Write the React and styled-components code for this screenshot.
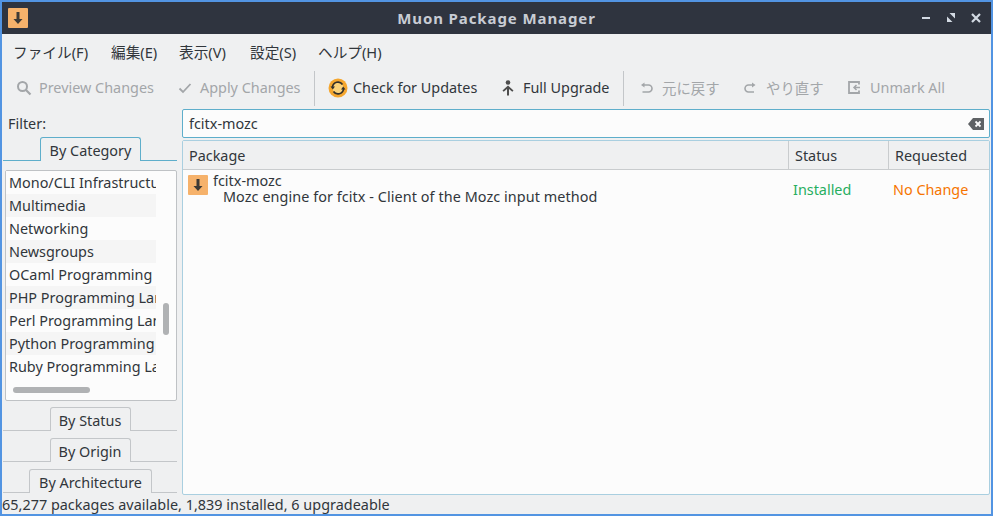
import React from 'react';
import styled, { createGlobalStyle } from 'styled-components';

const Global = createGlobalStyle`
html,body{margin:0;padding:0;background:#eff0f1;}
body{font-family:"Noto Sans","Noto Sans CJK JP",sans-serif;font-size:14.4px;color:#31363b;}
`
const Win = styled.div`
width:993px;height:516px;box-sizing:border-box;overflow:hidden;
border:2px solid #5294e2;
display:flex;flex-direction:column;background:#eff0f1;
`
const TitleBar = styled.div`
height:32px;flex:none;background:#2f343f;display:grid;grid-template-columns:1fr auto 1fr;align-items:center;
`
const AppIcon = styled.div`
width:20px;height:20px;margin-left:6px;background:#f6b26b;border-radius:1px;display:flex;align-items:center;justify-content:center;
`
const Title = styled.div`
font-weight:700;font-size:15px;color:#c8ccd4;letter-spacing:.9px;
`
const WinBtns = styled.div`
display:flex;justify-content:flex-end;align-items:center;gap:15px;padding-right:10px;color:#d3dae3;
`
const MenuBar = styled.div`
height:34px;flex:none;display:flex;align-items:center;padding-left:11px;box-sizing:border-box;
`
const MenuItem = styled.div`
margin-right:${p=>p.$gap}px;font-size:14.67px;white-space:nowrap;width:${p=>p.$w}px;
`
const ToolBar = styled.div`
height:40px;flex:none;display:flex;align-items:center;box-sizing:border-box;
`
const ToolBtn = styled.div`
display:flex;align-items:center;flex:none;width:${p=>p.$w}px;margin-left:${p=>p.$ml}px;
color:${p=>p.$off?'#a3a6a9':'#31363b'};white-space:nowrap;
svg{flex:none;margin-right:${p=>p.$gap||7}px;}
`
const ToolLabel = styled.span`
margin-top:-2px;
`
const Sep = styled.div`
width:1px;height:35px;background:#c3c6c9;flex:none;margin-left:${p=>p.$ml}px;
`
const Body = styled.div`
flex:1;min-height:0;display:flex;
`
const Side = styled.div`
width:174px;flex:none;display:flex;flex-direction:column;margin-left:1px;
`
const FilterLabel = styled.div`
height:30px;flex:none;display:flex;align-items:center;padding:1px 0 0 5px;box-sizing:border-box;
`
const TabRow = styled.div`
display:flex;align-items:flex-end;height:23px;flex:none;margin-top:${p=>p.$mt||0}px;margin-bottom:${p=>p.$mb||0}px;
`
const TabLine = styled.div`
flex:${p=>p.$grow||1} 1 0;border-bottom:1px solid ${p=>p.$on?'#5eaecb':'#c3c6c9'};
`
const Tab = styled.div`
flex:none;width:${p=>p.$w}px;height:24px;box-sizing:border-box;display:flex;align-items:center;justify-content:center;padding-top:2px;
border:1px solid ${p=>p.$on?'#5eaecb':'#c3c6c9'};border-bottom:none;border-radius:3px 3px 0 0;
`
const ListBox = styled.div`
margin:0 0 0 2px;width:172px;height:231px;flex:none;box-sizing:border-box;border:1px solid #bfc2c5;border-radius:2px;background:#fcfcfc;
display:grid;grid-template-columns:150px 1fr;grid-template-rows:209px 1fr;
`
const Items = styled.div`
overflow:hidden;
`
const Item = styled.div`
height:23px;line-height:23px;padding-left:3px;white-space:nowrap;overflow:hidden;background:${p=>p.$alt?'#f5f5f5':'#fcfcfc'};
`
const VTrack = styled.div`
padding:132px 0 0 7px;
`
const VThumb = styled.div`
width:6px;height:32px;border-radius:3px;background:#b0b2b4;
`
const HTrack = styled.div`
padding:7px 0 0 7px;
`
const HThumb = styled.div`
width:77px;height:6px;border-radius:3px;background:#b0b2b4;
`
const Main = styled.div`
flex:1;min-width:0;margin-left:5px;display:flex;flex-direction:column;
`
const Search = styled.div`
height:29px;flex:none;margin-top:1px;margin-right:1px;box-sizing:border-box;border:1px solid #5eaecb;border-radius:2px;background:#fcfcfc;
display:flex;align-items:center;justify-content:space-between;padding:0 5px 0 6px;
`
const Table = styled.div`
height:355px;flex:none;margin-top:2px;margin-right:1px;box-sizing:border-box;border:1px solid #a9cfe0;border-radius:2px;background:#fcfcfc;
`
const HeadRow = styled.div`
height:29px;display:grid;grid-template-columns:605px 100px 1fr;background:#eff0f1;border-bottom:1px solid #c9ccce;box-sizing:border-box;
`
const HeadCell = styled.div`
display:flex;align-items:center;padding-left:6px;border-left:${p=>p.$first?'none':'1px solid #c9ccce'};
`
const Row = styled.div`
display:grid;grid-template-columns:605px 100px 1fr;height:40px;
`
const PkgCell = styled.div`
display:flex;padding:5px 0 0 5px;
`
const PkgIcon = styled.div`
width:20px;height:20px;flex:none;background:#f6b26b;border-radius:1px;display:flex;align-items:center;justify-content:center;
`
const PkgText = styled.div`
margin-left:5px;margin-top:-2px;line-height:16px;
`
const PkgDesc = styled.div`
margin-left:10px;white-space:nowrap;letter-spacing:.07px;
`
const StateCell = styled.div`
display:flex;align-items:center;padding:0 0 2px 5px;color:${p=>p.$c};
`
const Status = styled.div`
height:19px;flex:none;display:flex;align-items:center;line-height:18px;white-space:nowrap;letter-spacing:.02px;
`

const Down = ({c='#3d3a36'}) => (
  <svg width="12" height="14" viewBox="0 0 12 14"><path d="M4.500 1h3v7h3L6 13 1.500 8h3z" fill={c}/></svg>
)
const Ico = ({children, size=16}) => (
  <svg width={size} height={size} viewBox="0 0 16 16" fill="none" stroke="currentColor" strokeWidth="1.6">{children}</svg>
)

const cats = ['Mono/CLI Infrastructure','Multimedia','Networking','Newsgroups','OCaml Programming','PHP Programming Language','Perl Programming Language','Python Programming Language','Ruby Programming Language']

function App() {
  return (<>
    <Global />
    <Win>
      <TitleBar>
        <AppIcon><Down /></AppIcon>
        <Title>Muon Package Manager</Title>
        <WinBtns>
          <svg width="10" height="10" viewBox="0 0 10 10"><rect x="1" y="4" width="8" height="2" fill="currentColor"/></svg>
          <svg width="10" height="10" viewBox="0 0 10 10"><path d="M1 3.500V9h5.500zM9 5.500V0H3.500z" fill="currentColor"/></svg>
          <svg width="10" height="10" viewBox="0 0 10 10"><path d="M1 1l8 8M9 1l-8 8" stroke="currentColor" strokeWidth="2.200"/></svg>
        </WinBtns>
      </TitleBar>
      <MenuBar>
        <MenuItem $w={76} $gap={22}>ファイル(F)</MenuItem>
        <MenuItem $w={47} $gap={21}>編集(E)</MenuItem>
        <MenuItem $w={49} $gap={22}>表示(V)</MenuItem>
        <MenuItem $w={46} $gap={22}>設定(S)</MenuItem>
        <MenuItem $w={64} $gap={0}>ヘルプ(H)</MenuItem>
      </MenuBar>
      <ToolBar>
        <ToolBtn $off $w={142} $ml={14}>
          <Ico><circle cx="6.500" cy="6.500" r="4.500" strokeWidth="2"/><path d="M10 10l4.500 4.500" strokeWidth="2.200"/></Ico>
          <ToolLabel>Preview Changes</ToolLabel>
        </ToolBtn>
        <ToolBtn $off $w={124} $ml={19}>
          <Ico><path d="M2.500 8.500l3.500 3.500 7.500-8" strokeWidth="1.800"/></Ico>
          <ToolLabel>Apply Changes</ToolLabel>
        </ToolBtn>
        <Sep $ml={13} />
        <ToolBtn $w={150} $ml={13} $gap={5}>
          <svg width="20" height="20" viewBox="0 0 20 20">
            <circle cx="10" cy="10" r="9.500" fill="#f5a62e"/>
            <circle cx="10" cy="10" r="5.500" fill="#fbd27a"/>
            <path d="M4.500 9a5.500 5.500 0 0 1 10-2.500M15.500 11a5.500 5.500 0 0 1-10 2.500" fill="none" stroke="#33302c" strokeWidth="1.700"/>
            <path d="M2.500 8.500h4.500l-2.200 3zM17.500 11.500H13l2.200-3z" fill="#33302c"/>
          </svg>
          <ToolLabel>Check for Updates</ToolLabel>
        </ToolBtn>
        <ToolBtn $w={108} $ml={22}>
          <svg width="16" height="16" viewBox="0 0 16 16" fill="#4d4d4d"><circle cx="8" cy="2.500" r="2.300"/><path d="M8 5.500l5.500 5-1.200 1.200L9 9v6.500H7V9l-3.300 2.700-1.200-1.200z"/></svg>
          <ToolLabel>Full Upgrade</ToolLabel>
        </ToolBtn>
        <Sep $ml={15} />
        <ToolBtn $off $w={82} $ml={15}>
          <Ico><path d="M2 5l3.500-2.500v5z" fill="currentColor" stroke="none"/><path d="M5 5h4.500a3.500 3.500 0 0 1 0 7H3.500"/></Ico>
          <ToolLabel>元に戻す</ToolLabel>
        </ToolBtn>
        <ToolBtn $off $w={82} $ml={22}>
          <Ico><path d="M12.500 5L9 2.500v5z" fill="currentColor" stroke="none"/><path d="M9 5H5.500a3.500 3.500 0 0 0 0 7H11"/></Ico>
          <ToolLabel>やり直す</ToolLabel>
        </ToolBtn>
        <ToolBtn $off $w={97} $ml={22}>
          <Ico><path d="M12 4.500V2H2v11h10v-2.500" strokeWidth="1.800"/><path d="M13 7.500H7M9.500 5L7 7.500 9.500 10" strokeWidth="1.500"/></Ico>
          <ToolLabel>Unmark All</ToolLabel>
        </ToolBtn>
      </ToolBar>
      <Body>
        <Side>
          <FilterLabel>Filter:</FilterLabel>
          <TabRow $mb={9}>
            <TabLine $on $grow={37} />
            <Tab $on $w={101}>By Category</Tab>
            <TabLine $on $grow={36} />
          </TabRow>
          <ListBox>
            <Items>
              {cats.map((c,i)=><Item key={c} $alt={i%2===1}>{c}</Item>)}
            </Items>
            <VTrack><VThumb /></VTrack>
            <HTrack><HThumb /></HTrack>
          </ListBox>
          <TabRow $mt={7}>
            <TabLine />
            <Tab $w={81}>By Status</Tab>
            <TabLine />
          </TabRow>
          <TabRow $mt={8}>
            <TabLine />
            <Tab $w={81}>By Origin</Tab>
            <TabLine />
          </TabRow>
          <TabRow $mt={8}>
            <TabLine $grow={26} />
            <Tab $w={123}>By Architecture</Tab>
            <TabLine $grow={25} />
          </TabRow>
        </Side>
        <Main>
          <Search>
            fcitx-mozc
            <svg width="16" height="12" viewBox="0 0 16 12"><path d="M5 0h11v12H5L0 6z" fill="#5f6265"/><path d="M7.500 3.500l5 5M12.500 3.500l-5 5" stroke="#fcfcfc" strokeWidth="1.800"/></svg>
          </Search>
          <Table>
            <HeadRow>
              <HeadCell $first>Package</HeadCell>
              <HeadCell>Status</HeadCell>
              <HeadCell>Requested</HeadCell>
            </HeadRow>
            <Row>
              <PkgCell>
                <PkgIcon><Down /></PkgIcon>
                <PkgText>
                  fcitx-mozc
                  <PkgDesc>Mozc engine for fcitx - Client of the Mozc input method</PkgDesc>
                </PkgText>
              </PkgCell>
              <StateCell $c="#27ae60">Installed</StateCell>
              <StateCell $c="#f67400">No Change</StateCell>
            </Row>
          </Table>
        </Main>
      </Body>
      <Status>65,277 packages available, 1,839 installed, 6 upgradeable</Status>
    </Win>
  </>)
}
export default App
